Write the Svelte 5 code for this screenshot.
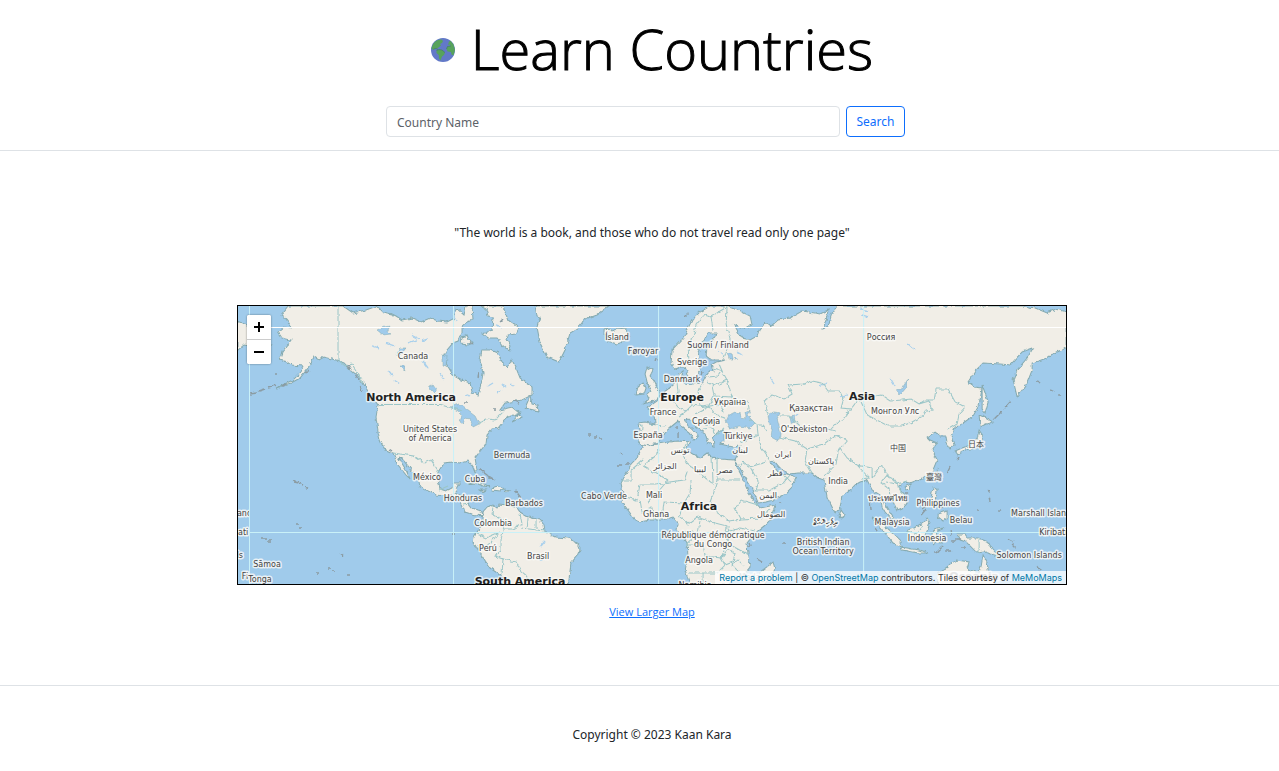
<script>
  let country = $state('');

  const land = [
    // North and Central America
    'M288 306L281 315L286 319L289 323L291 328L284 327L278 332L282 338L291 340L286 347L282 352L279 360L287 362L291 365L303 366L301 372L293 380L276 388L291 383L300 378L308 368L314 357L319 360L324 357L336 360L344 363L353 372L358 376L363 383L369 393L378 405L376 417L378 432L380 440L384 449L393 453L398 465L406 475L410 479L406 470L398 457L403 460L413 472L419 482L420 487L436 495L446 496L453 496L460 502L465 512L471 514L477 515L483 516L482 512L478 511L472 508L468 503L468 498L460 495L455 492L457 487L460 483L453 483L452 488L446 491L440 489L438 480L438 472L444 463L453 462L460 463L468 461L472 465L475 473L477 470L475 458L481 450L486 444L487 435L492 429L498 428L502 423L508 417L520 413L512 422L522 417L518 412L512 407L500 410L505 403L522 400L532 395L532 387L526 383L520 378L516 368L512 360L507 367L502 363L498 353L491 350L482 350L480 360L483 373L482 380L478 395L472 392L470 383L462 380L453 375L447 365L443 357L447 350L453 343L458 341L462 333L462 326L467 322L473 320L472 306L466 306L464 315L457 309L453 319L447 322L438 321L430 318L421 322L412 318L402 320L396 316L392 314L383 312L377 306L366 310L353 313L343 306Z',
    'M530 396L525 408L538 411L537 405L532 404Z',
    'M480 306L486 309L488 316L493 317L492 330L483 334L488 338L497 338L502 345L509 351L511 346L507 340L508 335L516 334L519 328L513 324L508 320L505 312L503 306Z',
    'M462 337L467 335L469 340L474 343L468 345L461 344Z',
    'M535 306L537 316L540 317L537 327L540 343L547 357L559 362L565 350L570 333L577 329L585 319L596 315L609 306Z',
    'M604 329L609 328L612 331L618 329L625 328L629 336L623 342L617 344L607 341L609 336L604 334Z',
    'M468 484L475 481L484 484L490 487L483 486L475 483Z',
    'M492 488L497 486L504 489L500 491L492 490Z',
    'M505 490L511 491L506 492Z', 'M480 490L486 490L483 492Z',
    // South America
    'M483 512L487 507L493 505L497 508L499 504L507 505L517 508L520 512L528 517L540 520L544 525L545 532L555 537L568 538L578 544L580 549L577 556L571 563L568 586L510 586L503 577L490 568L480 553L473 542L474 537L477 532L483 523Z',
    // Africa
    'M643 445L637 458L631 464L627 472L621 483L623 494L622 502L630 513L634 519L640 522L650 520L662 520L673 517L678 523L677 530L682 535L687 543L688 557L685 570L690 585L728 585L735 578L745 573L750 567L748 556L747 543L755 533L764 526L770 520L775 505L760 508L755 502L748 492L743 479L737 467L734 460L720 459L712 457L707 453L700 458L692 453L688 452L687 447L690 442L678 441L669 442L658 444Z',
    'M773 562L775 569L771 576L763 586L757 586L760 572Z',
    // Eurasia
    'M710 306L700 312L692 320L687 330L685 336L672 350L671 363L675 369L681 367L685 367L688 375L691 379L695 376L700 370L699 362L698 352L703 342L708 333L717 333L714 338L707 346L706 356L711 360L725 360L716 362L711 365L713 371L708 372L705 377L702 383L692 384L684 383L681 378L683 371L679 374L677 382L668 389L660 395L657 401L647 408L654 415L655 424L645 422L638 423L639 431L637 438L640 444L648 446L658 443L664 433L672 426L678 421L682 427L690 433L694 440L698 435L688 426L685 420L689 419L696 427L705 433L708 443L714 447L713 438L718 432L724 430L724 440L720 444L733 447L740 446L738 454L734 461L738 465L745 477L753 490L758 503L766 502L773 500L785 494L792 487L796 478L788 473L784 475L778 472L770 462L774 461L782 470L790 474L798 473L812 473L818 478L824 480L827 497L835 513L840 508L842 495L850 490L855 485L860 482L867 480L872 490L880 495L882 507L885 512L892 520L894 519L888 510L883 502L885 497L892 500L897 510L902 508L907 502L905 495L898 487L903 482L910 483L923 478L932 472L937 460L932 450L937 443L930 440L927 437L935 432L940 436L946 436L947 444L950 449L954 445L951 436L955 427L963 423L973 416L979 405L982 388L975 387L968 382L975 371L983 363L1000 364L1010 365L1022 352L1033 348L1027 358L1017 370L1013 380L1017 397L1027 383L1032 370L1032 363L1047 358L1056 352L1067 348L1067 312L1056 309L1047 313L1035 308L1023 306L837 306L832 313L828 326L823 329L826 320L828 310L820 314L809 312L802 311L790 318L778 320L770 327L765 323L759 330L757 336L750 340L742 338L734 325L742 329L752 325L750 316L740 311L726 306Z',
    'M237 321L247 325L262 331L272 345L262 342L250 346L244 345L237 351Z',
    // British Isles
    'M647 367L653 370L650 376L654 381L657 388L660 394L658 399L650 402L643 404L649 398L647 394L651 390L647 382L645 374Z',
    'M638 386L643 382L646 388L644 394L636 395Z',
    // Asian islands and Oceania
    'M982 385L985 393L988 402L985 413L982 409L982 398Z',
    'M979 415L986 418L993 422L986 424L980 427Z',
    'M979 430L983 436L981 444L975 448L965 450L958 455L955 451L962 448L970 445L977 438Z',
    'M904 487L911 484L910 489L906 490Z', 'M933 478L937 470L938 475L935 481Z',
    'M933 488L937 490L935 502L941 507L934 504L931 498Z',
    'M938 514L947 511L947 518L943 521L938 517Z',
    'M907 530L914 528L922 523L927 518L930 523L927 531L922 541L910 540Z',
    'M872 517L880 522L893 533L901 541L901 547L893 543L884 532L877 524Z',
    'M900 547L912 549L920 550L928 553L918 553L902 550Z',
    'M932 532L937 529L944 528L938 531L936 534L941 543L937 542L934 544L932 538Z',
    'M957 534L964 534L967 538L978 538L988 542L992 549L999 556L990 554L984 551L976 552L966 542L960 540Z',
    'M937 586L938 573L947 567L951 563L957 560L969 562L967 568L978 574L981 566L983 555L987 563L988 570L996 586Z',
    'M841 509L845 515L842 519L839 516Z'
  ];

  const water = [
    // Black, Caspian and Aral seas, Baltic inlets
    'M726 421L729 415L735 412L740 413L741 417L746 418L745 412L750 410L748 416L755 423L750 428L739 426L729 429Z',
    'M768 416L773 412L780 413L777 419L779 426L781 435L778 441L771 437L772 429L769 423Z',
    'M790 417L794 416L795 421L791 423Z',
    'M450 407L459 404L467 410L475 416L479 424L473 427L470 419L465 418L463 424L460 422L462 415L458 411Z',
    'M896 391L902 388L908 379L905 389L900 395Z',
    'M727 352L732 354L733 359L729 359Z', 'M736 356L738 359L735 360Z',
    'M377 330L384 327L390 326L387 332L391 334L383 335Z',
    'M396 354L401 348L406 348L402 353L398 357Z',
    'M429 387L433 385L437 391L434 393L431 390Z',
    'M400 366L404 366L406 371L402 368Z', 'M443 354L447 356L446 366L443 365Z'
  ];

  const streams = 'M411 335l8 4M408 343l9-3M422 341l6-2M386 343l8 3M388 370l5 6M394 380l6 4M422 360l6 8M440 374l4 6M372 346l7 2M452 313l5 8M495 325l8 3M488 386l5-3M502 385l4 2M496 393l6-2M511 383l3 4M465 394l5 2M860 309l8 2M862 315l6 2M908 344l6 5M840 397l7-2M792 418l6-4M819 386l8-3M770 378l4 6M722 345l3 3M718 352l5 2M737 352l5 3M890 378l5 8M540 560l6-6M545 541l-5 6';

  const borders = 'M338 306V360L345 366L352 364L363 382M378 404.5H441L452 408L463 411M479 423L488 419L495 420L504 411M393 453L414 456L424 463L431 460L439 472M439 490L448 486M455 494L459 499M463 504L468 503M493 506L492 514L505 521L503 529L513 529M477 534L486 538L500 532L491 542L486 546M503 530L501 540L501 551L494 556L503 559L516 562L521 572L528 578L526 584M477 546L490 548M513 529L522 524L520 514M528 518L527 529M536 520L536 528M521 528L545 531M503 558L502 574 M658 444L659 453L643 466M643 460L631 470L631 481L621 481M643 466L668 480M622 496L637 500L640 484L655 484M655 484L684 480L687 472M668 480L657 493L647 502M687 442L682 453L686 463M686 463L713 484L712 458M717 457V480H740M717 480L713 494L710 502L716 512L729 521L741 519M640 500L642 512L652 508L654 520M662 517L664 502L684 503L690 493L691 480M684 503L679 516L688 524L697 517L711 522M700 520L698 533L686 544M682 532H694M711 522L727 526L726 532L740 528L755 531M741 500L735 508L741 519L762 518L770 509M741 500L758 505M729 526L727 543L743 552L748 555M686 545L703 545L705 556L721 558L725 565L738 560L744 566M727 543L721 558M688 573H717M703 573V584M717 573L725 565M721 558L728 549L735 553L732 565L743 576 M689 363L688 347L693 337L696 325L704 315L711 317L720 311M711 317L713 331M720 311L727 307M727 307L726 324L730 340L724 358M713 368L722 371L719 364M708 377L718 376L722 370M706 382L714 386L727 380L722 371M712 386L714 396L732 397L727 380M714 396L709 405L700 406L698 391L703 384M677 383L678 392L672 400L678 407L686 411M664 393L678 397M688 397L692 405L686 411L679 416M692 405L705 407L720 404L724 413M695 414L709 407L717 416L726 418M698 422L708 425L718 420M703 429L711 428L716 435L724 428M732 397L735 403L748 402L749 409M639 425L642 426L641 438M649 424L665 426M749 419L757 425L762 425L767 431M757 425L758 435L740 443M758 435L762 449L770 461M768 414L764 401L772 395L784 399L792 394L788 385L804 384L812 381L822 383L828 391L838 391L844 397L841 408L851 409L844 418L838 422L831 429M780 416L789 416L799 425L812 432L822 428L836 431M779 437L795 441L807 449L805 461L812 473M807 449L824 444L835 435L847 440L838 451L836 464L824 477M840 448L847 458L857 465L872 468M857 465L869 478L861 479M872 468L872 478M766 462L750 467L743 462L739 468M750 467L758 481L755 490L770 490L783 483L790 475M785 476L791 482 M844 418L857 401L864 398L881 395L890 401L902 400L911 399L919 404L929 401L932 410L926 411L923 416L912 422L902 426L888 426L867 415L861 402M919 404L925 400L934 400L936 389L948 389L955 402L965 407L959 414L957 424L947 430M872 478L882 465L887 475L881 483L889 489L890 498M885 475L893 479L897 484L907 481M886 482L897 484L903 496L895 501M907 531L917 534L923 526M979 538V552';

  const specks = 'M268 387l8-2M259 391l6-2M249 394l9-1M282 386l5-2M305 373l5-3M348 365l3 5M355 374l3 5M360 386l2 5M294 481l5 1M299 483l4 2M305 487l2 1M296 524h2M300 528h2M261 539h6M268 541h3M340 553l4 3M328 569h3M332 571h3M317 573h2M347 575h3M389 449l3 2M588 435h3M594 437h4M599 439h2M621 453l2 1M617 465h5M625 464h4M515 490l6 8M479 469l8 6M487 475l8 5M452 533h3M749 543l1 3M757 559l5 3M778 503h3M783 543h2M1036 381l4 2M1050 390l4 2M1058 395h3M1010 401l-6 7M1002 411l-9 9M947 473l3-6M957 460l2-3M988 490l1 3M989 498l1 3M976 510h2M999 511h2M1007 538l6 3M1012 544l4 4M1026 553l5 3M1037 565l4 6M905 493h2M927 504l-5 5M926 509l-5 6M939 509l4-3M934 552h5M945 551h6M942 547l-6 6M951 529l1 6M952 541h3M955 539h6M962 547h3M870 502l1 8M875 528l2 3M655 361l1-3M688 313l-4 4M677 426v3M678 433v4M702 375l1-3M500 322l3-3M470 342l3 2M479 373l-1 5M496 409h-3M276 374h2M465 403h2M514 401l5 2';

  const places = [
    ['Canada', 413, 359], ['Ísland', 617, 340], ['Føroyar', 643, 354], ['Suomi / Finland', 718, 348],
    ['Sverige', 692, 365], ['Danmark', 682, 382], ['France', 663, 415], ['Україна', 730, 405],
    ['Србија', 706, 424], ['España', 648, 438], ['Türkiye', 738, 439], ['Қазақстан', 811, 411],
    ["O'zbekiston", 804, 432], ['Монгол Улс', 895, 414], ['Россия', 881, 340],
    ['United States', 430, 432], ['of America', 430, 441], ['Bermuda', 512, 458],
    ['México', 427, 480], ['Cuba', 475, 482], ['Honduras', 463, 501], ['Barbados', 524, 506],
    ['Colombia', 493, 526], ['Perú', 488, 551], ['Brasil', 538, 559], ['Cabo Verde', 604, 499],
    ['Mali', 654, 498], ['Ghana', 656, 517], ['Angola', 699, 563],
    ['République démocratique', 713, 538], ['du Congo', 713, 547],
    ['India', 838, 484], ['British Indian', 823, 545], ['Ocean Territory', 823, 554],
    ['Philippines', 938, 506], ['Malaysia', 892, 525], ['Indonesia', 927, 541], ['Belau', 961, 523],
    ['Solomon Islands', 1029, 558], ['Sāmoa', 267, 567], ['Fi', 245, 579], ['Tonga', 260, 582],
    ['تونس', 680, 453], ['الجزائر', 665, 469], ['ليبيا', 700, 472], ['مصر', 725, 473],
    ['لبنان', 740, 453], ['ایران', 783, 457], ['قطر', 775, 476], ['اليمن', 768, 498],
    ['الصومال', 771, 517], ['پاکستان', 821, 464], ['中国', 898, 451], ['日本', 976, 447],
    ['臺灣', 934, 480], ['ประเทศไทย', 888, 501], ['ދިވެހިރާއްޖެ', 825, 525]
  ];

  const continents = [
    ['North America', 411, 401], ['Europe', 682, 401], ['Asia', 862, 400],
    ['Africa', 699, 510], ['South America', 520, 585]
  ];
</script>

<header>
  <h1>
    <svg class="globe" viewBox="0 0 24 24" aria-hidden="true">
      <circle cx="12" cy="12" r="12" fill="#6279c8" />
      <path fill="#57a35c" d="M1.200 8C3 3.500 6.500 1.500 10.500 1.500L12 3L11 5L9 6L10 7.500L7.500 9.500L6.500 10.500L4 10.500L2.500 12L.4 10.500ZM5.500 12.500L8 11.500L11 12L14 14.500L13 17L11 18.500L9.500 22.500L8 20.500L7.700 17L5.500 15ZM18 3.500L19.500 2.700L22.500 6.500L24 12L22.500 17.500L20.500 16.500L20 14L16.500 13.500L15.500 11L16.500 8.500L19.500 8L18.500 6.500L17 7Z" />
      <path fill="none" stroke="#427d65" stroke-width=".7" d="M5.500 12.500L8 11.500L11 12L14 14.500M15.500 11L16.500 8.500L20 8M2.500 11L5 10.500L7 11.500" />
    </svg>
    <span>Learn Countries</span>
  </h1>
  <form onsubmit={(e) => e.preventDefault()}>
    <input type="text" placeholder="Country Name" aria-label="Country Name" bind:value={country} />
    <button class="search" type="submit">Search</button>
  </form>
</header>

<main>
  <p class="quote">"The world is a book, and those who do not travel read only one page"</p>
  <div class="map">
    <svg class="world" viewBox="238 306 828 278" preserveAspectRatio="xMidYMid slice" role="img" aria-label="World map">
      <defs>
        <filter id="coast" x="0" y="0" width="1" height="1">
          <feTurbulence type="fractalNoise" baseFrequency=".22" numOctaves="2" seed="4" />
          <feDisplacementMap in="SourceGraphic" scale="4" xChannelSelector="R" yChannelSelector="G" />
        </filter>
        <clipPath id="west"><rect x="238" y="306" width="11" height="278" /></clipPath>
      </defs>
      <g filter="url(#coast)">
        <rect x="228" y="296" width="848" height="298" fill="#a0cbeb" />
        <g class="land">{#each land as d}<path {d} />{/each}</g>
        <g class="water">{#each water as d}<path {d} />{/each}</g>
        <path class="streams" d={streams} />
        <path class="borders" d={borders} />
        <path class="specks" d={specks} />
      </g>
      <path class="grid-water" d="M249.500 306V584M453.500 306V584M658.500 306V584M863.500 306V584M249 532.500H1066" />
      <path class="grid-top" d="M249 327.500H1066" />
      <g class="places">
        {#each places as [name, x, y]}<text {x} {y}>{name}</text>{/each}
        <text x="695" y="588">Namibia</text>
        <text class="faint" x="763" y="580">Madagascar</text>
        <text class="start" x="1011" y="516">Marshall Islands</text>
        <text class="start" x="1039" y="535">Kiribati</text>
        <g clip-path="url(#west)">
          <text class="start" x="192" y="516">Marshall Islands</text>
          <text class="start" x="220" y="535">Kiribati</text>
          <text class="end" x="243" y="558">Solomon Islands</text>
        </g>
      </g>
      <g class="continents">
        {#each continents as [name, x, y]}<text {x} {y}>{name}</text>{/each}
        <text class="faint" x="974" y="580">Oceania</text>
      </g>
    </svg>
    <div class="zoom">
      <button type="button" aria-label="Zoom in"><svg viewBox="0 0 10 10"><path d="M0 5H10M5 0V10" /></svg></button>
      <button type="button" aria-label="Zoom out"><svg viewBox="0 0 10 10"><path d="M0 5H10" /></svg></button>
    </div>
    <div class="credit">
      <a href="#report">Report a problem</a> | © <a href="#osm">OpenStreetMap</a> contributors. Tiles courtesy of <a href="#memomaps">MeMoMaps</a>
    </div>
  </div>
  <a class="larger" href="#map">View Larger Map</a>
</main>

<footer>Copyright © 2023 Kaan Kara</footer>

<style>
  :global(body) {
    margin: 0;
    background: #fff;
    color: #212529;
    font: 12px/20px "Noto Sans", "Open Sans", sans-serif;
  }
  header, main, footer {
    box-sizing: border-box;
    display: flex;
    flex-direction: column;
    align-items: center;
    padding-left: 25px;
  }
  header {
    padding-top: 14px;
    padding-bottom: 13px;
    border-bottom: 1px solid #dee2e6;
  }
  h1 {
    display: flex;
    align-items: center;
    gap: 16px;
    margin: 0 0 20px;
    color: #000;
    font-family: "Open Sans", "Noto Sans", sans-serif;
    font-size: 56px;
    line-height: 72px;
    font-weight: 300;
  }
  h1 span {
    padding-bottom: 4px;
    line-height: 68px;
    -webkit-text-stroke: 1px #000;
  }
  .globe { width: 24px; height: 24px; }
  form {
    box-sizing: border-box;
    display: flex;
    gap: 6px;
    width: 100%;
    max-width: 532px;
    padding-right: 13px;
  }
  input, .search {
    box-sizing: border-box;
    height: 31px;
    border-radius: 4px;
    background: #fff;
    font: inherit;
  }
  input {
    flex: 1;
    min-width: 0;
    padding: 5px 10px 4px;
    border: 1px solid #dee2e6;
    color: #212529;
  }
  input::placeholder { color: #5c6268; opacity: 1; }
  .search {
    width: 59px;
    padding: 1px 0 0;
    border: 1px solid #0d6efd;
    color: #0d6efd;
  }
  main {
    padding-top: 72px;
    padding-bottom: 63px;
    border-bottom: 1px solid #dee2e6;
  }
  .quote { margin: 0 0 62px; }
  .map {
    position: relative;
    box-sizing: border-box;
    width: 66.2%;
    height: 280px;
    border: 1px solid #000;
    overflow: hidden;
    background: #a0cbeb;
  }
  .world { display: block; width: 100%; height: 100%; }
  .land path { fill: #f1eee7; stroke: #85aab0; stroke-width: 1; }
  .water path { fill: #a0cbeb; stroke: #85aab0; stroke-width: .5; }
  .streams { fill: none; stroke: #a9d0ec; stroke-width: 1.3; }
  .borders { fill: none; stroke: #9bc6c8; stroke-width: 1; }
  .specks { fill: none; stroke: #8b9ca3; stroke-width: 1.4; }
  .grid-water { stroke: #c9f1f8; stroke-width: 1; }
  .grid-top { stroke: #fff; stroke-width: 1; }
  .places text {
    font: 8px "DejaVu Sans", "Noto Sans CJK SC", sans-serif;
    text-anchor: middle;
    fill: #444;
    stroke: rgba(250, 250, 248, .8);
    stroke-width: 3;
    stroke-linejoin: round;
    paint-order: stroke;
  }
  .places .start { text-anchor: start; }
  .places .end { text-anchor: end; }
  .continents text {
    font: bold 11px "DejaVu Sans", sans-serif;
    text-anchor: middle;
    fill: #222;
    stroke: rgba(250, 250, 248, .7);
    stroke-width: 3;
    stroke-linejoin: round;
    paint-order: stroke;
  }
  .places .faint, .continents .faint { fill: #999; }
  .zoom {
    position: absolute;
    top: 9px;
    left: 9px;
    width: 24px;
    border-radius: 2px;
    overflow: hidden;
    background: #fff;
    box-shadow: 0 0 2px rgba(0, 0, 0, .5);
  }
  .zoom button {
    display: flex;
    align-items: center;
    justify-content: center;
    width: 24px;
    height: 24px;
    padding: 0;
    border: 0;
    background: #fff;
  }
  .zoom button + button { height: 25px; border-top: 1px solid #ccc; }
  .zoom svg { width: 10px; height: 10px; }
  .zoom path { stroke: #000; stroke-width: 2; }
  .credit {
    position: absolute;
    right: 0;
    bottom: 0;
    padding: 0 4px;
    background: rgba(255, 255, 255, .75);
    color: #333;
    font: 9px/13px Inter, "Liberation Sans", Arial, sans-serif;
    white-space: nowrap;
  }
  .credit a { color: #0078a8; text-decoration: none; }
  .larger {
    margin-top: 17px;
    color: #0d6efd;
    font-family: "Open Sans", "Noto Sans", sans-serif;
    font-size: 11px;
  }
  footer { padding-top: 39px; padding-bottom: 23px; }
</style>
